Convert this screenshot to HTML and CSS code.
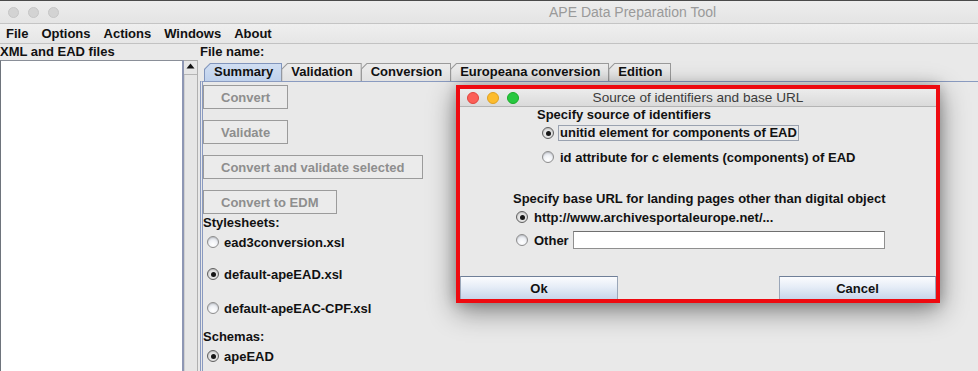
FILE: index.html
```html
<!DOCTYPE html>
<html>
<head>
<meta charset="utf-8">
<title>APE Data Preparation Tool</title>
<link rel="stylesheet" href="styles.css">
</head>
<body>
<div class="window">
  <div class="titlebar">
    <div class="lights">
      <span class="light off"></span><span class="light off"></span><span class="light off"></span>
    </div>
    <div class="wtitle">APE Data Preparation Tool</div>
  </div>
  <div class="menubar">
    <span>File</span><span>Options</span><span>Actions</span><span>Windows</span><span>About</span>
  </div>
  <div class="main">
    <div class="leftcol">
      <div class="label">XML and EAD files</div>
      <div class="listwrap">
        <div class="list"></div>
        <div class="scrollbar">
          <div class="sb-up"><svg width="9" height="6" viewBox="0 0 9 6"><path d="M0.5 5.5 L4.5 0.5 L8.5 5.5 Z" fill="#111"/></svg></div>
          <div class="sb-track"></div>
        </div>
      </div>
    </div>
    <div class="rightcol">
      <div class="label">File name:</div>
      <div class="tabs">
        <div class="tab selected">Summary</div>
        <div class="tab">Validation</div>
        <div class="tab">Conversion</div>
        <div class="tab">Europeana conversion</div>
        <div class="tab">Edition</div>
      </div>
      <div class="tabpanel">
        <button class="btn" disabled>Convert</button>
        <button class="btn" disabled>Validate</button>
        <button class="btn" disabled>Convert and validate selected</button>
        <button class="btn" disabled>Convert to EDM</button>
        <div class="label section">Stylesheets:</div>
        <div class="radio-row r1"><span class="radio"></span>ead3conversion.xsl</div>
        <div class="radio-row r2"><span class="radio checked"></span>default-apeEAD.xsl</div>
        <div class="radio-row r3"><span class="radio"></span>default-apeEAC-CPF.xsl</div>
        <div class="label section2">Schemas:</div>
        <div class="radio-row r4"><span class="radio checked"></span>apeEAD</div>
      </div>
    </div>
  </div>

  <div class="dialog">
    <div class="dtitlebar">
      <div class="lights dl">
        <span class="light red"></span><span class="light yellow"></span><span class="light green"></span>
      </div>
      <div class="dtitle">Source of identifiers and base URL</div>
      <div></div>
    </div>
    <div class="dbody">
      <div class="block1">
        <div class="dlabel">Specify source of identifiers</div>
        <div class="drow first"><span class="radio checked"></span><span class="focus">unitid element for components of EAD</span></div>
        <div class="drow second"><span class="radio"></span><span class="nofocus">id attribute for c elements (components) of EAD</span></div>
      </div>
      <div class="block2">
        <div class="dlabel">Specify base URL for landing pages other than digital object</div>
        <div class="drow url"><span class="radio checked"></span>http://www.archivesportaleurope.net/...</div>
        <div class="drow other"><span class="radio"></span>Other<span class="field"></span></div>
      </div>
    </div>
    <div class="dfooter">
      <button class="dbtn ok">Ok</button>
      <button class="dbtn cancel">Cancel</button>
    </div>
  </div>
</div>
</body>
</html>
```

FILE: styles.css
```css
* { box-sizing: border-box; }
html, body { margin: 0; padding: 0; }
body {
  width: 978px;
  height: 371px;
  overflow: hidden;
  background: #e9e9e9;
  font-family: "Liberation Sans", Arial, sans-serif;
  font-size: 13px;
  font-weight: bold;
  color: #111;
}
.window {
  position: relative;
  width: 978px;
  height: 371px;
  display: flex;
  flex-direction: column;
}

/* title bar */
.titlebar {
  height: 24px;
  border-top: 1px solid #4a4a4a;
  border-bottom: 1px solid #c4c4c4;
  background: linear-gradient(#ededed, #e4e4e4);
  display: flex;
  align-items: center;
  flex: none;
}
.lights { display: flex; gap: 9px; padding-left: 8px; }
.light {
  width: 11px;
  height: 11px;
  border-radius: 50%;
  display: block;
}
.light.off { background: #d3d3d3; border: 1px solid #c6c6c6; }
.wtitle {
  margin-left: 490px;
  font-weight: normal;
  font-size: 14px;
  color: #9a9a9a;
}

/* menu */
.menubar {
  height: 20px;
  flex: none;
  display: flex;
  align-items: center;
  gap: 13px;
  padding-left: 6px;
  background: linear-gradient(#efefef, #e6e6e6);
  border-bottom: 1px solid #c2c2c2;
}

.main {
  flex: 1;
  display: flex;
  min-height: 0;
}
.label { height: 16px; line-height: 16px; white-space: nowrap; }

.leftcol {
  width: 198px;
  flex: none;
  display: flex;
  flex-direction: column;
}
.listwrap { flex: 1; display: flex; }
.list {
  width: 184px;
  background: #fff;
  border-left: 1px solid #6e747c;
  border-top: 1px solid #8a8f98;
  border-right: 2px solid #8e97b4;
}
.scrollbar {
  width: 14px;
  display: flex;
  flex-direction: column;
  border-top: 1px solid #a8a8a8;
  border-right: 1px solid #b0b0b0;
  background: #e6e6e6;
}
.sb-up {
  height: 14px;
  display: flex;
  align-items: center;
  justify-content: center;
  border-bottom: 1px solid #b5b5b5;
  padding-bottom: 3px;
}
.sb-track { flex: 1; border-left: 1px solid #d0d0d0; }

.rightcol {
  margin-left: 2px;
  flex: 1;
  display: flex;
  flex-direction: column;
}

/* tabs */
.tabs {
  display: flex;
  margin-top: 3px;
  padding-left: 4px;
  height: 18px;
  flex: none;
}
.tab {
  position: relative;
  height: 18px;
  line-height: 18px;
  padding: 0 9px 0 10px;
  background: #9a9a9a;
  clip-path: polygon(6px 0, 100% 0, 100% 100%, 0 100%, 0 6px);
  white-space: nowrap;
  margin-right: -1px;
}
.tab::before {
  content: "";
  position: absolute;
  left: 1px; top: 1px; right: 1px; bottom: 0;
  background: linear-gradient(#ececec, #e2e2e2);
  clip-path: polygon(5.5px 0, 100% 0, 100% 100%, 0 100%, 0 5.5px);
  z-index: -1;
}
.tab.selected { background: #8195bc; }
.tab.selected::before { background: linear-gradient(#d0def2, #bfd1ec); }

.tabpanel {
  flex: 1;
  border-top: 1px solid #8a9bc0;
  border-left: 3px double #8a9ac0;
  display: flex;
  flex-direction: column;
  align-items: flex-start;
  padding-top: 3px;
}
.btn {
  font: inherit;
  height: 24px;
  padding: 0 17px;
  margin: 0 0 11px 0;
  border: 1px solid #9b9b9b;
  background: #ebebeb;
  color: #8e8e8e;
  white-space: nowrap;
}
.btn:nth-child(4) { margin-bottom: 1px; }
.section { margin-top: 0; }
.radio-row {
  height: 18px;
  display: flex;
  align-items: center;
  gap: 5px;
  padding-left: 4px;
  white-space: nowrap;
}
.r1 { margin-top: 2px; }
.r2 { margin-top: 14px; }
.r3 { margin-top: 16px; }
.section2 { margin-top: 12px; }
.r4 { margin-top: 2px; }

.radio {
  position: relative;
  width: 12px;
  height: 12px;
  flex: none;
  border-radius: 50%;
  border: 1px solid #8d8d8d;
  background: radial-gradient(circle at 50% 75%, #ffffff 0%, #f0f2f6 45%, #c4c8d0 100%);
  box-shadow: inset 0 1px 1px rgba(0,0,0,0.12);
}
.radio.checked {
  border-color: #5f5f5f;
  background: radial-gradient(circle at 50% 55%, #f4f4f4 0%, #cfcfcf 100%);
}
.radio.checked::after {
  content: "";
  position: absolute;
  left: 2.5px; top: 2.5px;
  width: 5px; height: 5px;
  border-radius: 50%;
  background: #161616;
}

/* dialog */
.dialog {
  position: absolute;
  left: 456px;
  top: 85px;
  width: 484px;
  height: 218px;
  border: 4px solid #ee0a10;
  background: #e9e9e9;
  display: flex;
  flex-direction: column;
  box-shadow: 0 8px 26px rgba(0,0,0,0.45), 0 0 12px rgba(0,0,0,0.2);
}
.dtitlebar {
  height: 18px;
  flex: none;
  display: grid;
  grid-template-columns: 1fr auto 1fr;
  align-items: center;
  background: linear-gradient(#ececec, #dadada);
  border-bottom: 1px solid #b4b4b4;
}
.lights.dl { gap: 8px; padding-left: 7px; }
.light.red { width: 12px; height: 12px; background: #fc5f57; border: 1px solid #e0443e; }
.light.yellow { width: 12px; height: 12px; background: #fdbc2e; border: 1px solid #dea123; }
.light.green { width: 12px; height: 12px; background: #28c840; border: 1px solid #1aab29; }
.dtitle {
  font-weight: normal;
  font-size: 13.6px;
  color: #3c3c3c;
  white-space: nowrap;
}
.dbody { flex: 1; }
.block1 { padding-left: 77px; }
.dlabel { height: 15px; line-height: 15px; white-space: nowrap; }
.drow {
  display: flex;
  align-items: center;
  white-space: nowrap;
  height: 18px;
}
.drow.first { margin-top: 2px; padding-left: 5px; gap: 4px; }
.drow.second { margin-top: 6px; padding-left: 5px; gap: 6px; }
.focus {
  border: 1px solid #9aa2b0;
  padding: 0 1px 0 1px;
  height: 16px;
  line-height: 14px;
}
.block2 { padding-left: 53px; margin-top: 25px; }
.drow.url { margin-top: 2px; padding-left: 3px; gap: 6px; }
.drow.other { margin-top: 5px; padding-left: 3px; gap: 6px; }
.field {
  width: 312px;
  height: 18px;
  margin-left: -2px;
  background: #fff;
  border: 1px solid #8f8f8f;
  border-top-color: #6f6f6f;
}
.dfooter {
  height: 23px;
  flex: none;
  display: flex;
  justify-content: space-between;
}
.dbtn {
  font: inherit;
  color: #111;
  height: 23px;
  padding: 0;
  border: 1px solid #9aa6b8;
  border-top-color: #6f7f98;
  border-bottom: none;
  background: linear-gradient(#fbfcfe, #e6edf7 45%, #c7d5ea);
}
.dbtn.ok { width: 158px; }
.dbtn.cancel { width: 157px; }
```
